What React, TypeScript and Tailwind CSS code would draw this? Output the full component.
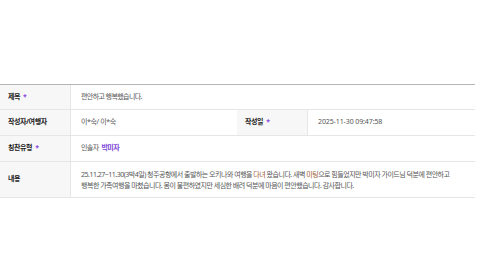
const Label = ({ text, required }: { text: string; required?: boolean }) => (
  <div className="flex w-[70px] shrink-0 items-center bg-[#f7f7f7] pl-[8px] text-[7px] font-bold tracking-[-0.4px] text-[#222]">
    {text}
    {required && <span className="ml-[3px] text-[#8a4ee0]">*</span>}
  </div>
);

const App = () => {
  return (
    <div
      className="h-[280px] w-[480px] bg-white pt-[84px]"
      style={{ fontFamily: '"Noto Sans", "Noto Sans CJK KR", sans-serif' }}
    >
      <div className="w-[475px] border-t border-[#b5b5b5] text-[7px] text-[#555]">
        <div className="flex h-[25px] border-b border-[#e6e6e6]">
          <Label text="제목" required />
          <div className="flex flex-1 items-center border-l border-[#e6e6e6] pl-[10px] tracking-[-0.6px]">
            편안하고 행복했습니다.
          </div>
        </div>
        <div className="flex h-[26px] border-b border-[#e6e6e6]">
          <Label text="작성자/여행자" />
          <div className="flex w-[167px] items-center border-l border-[#e6e6e6] pl-[10px] tracking-[-0.4px]">
            이*숙/ 이*숙
          </div>
          <Label text="작성일" required />
          <div className="flex flex-1 items-center border-l border-[#e6e6e6] pl-[10px] tracking-[-0.1px]">
            2025-11-30 09:47:58
          </div>
        </div>
        <div className="flex h-[26px] border-b border-[#e6e6e6]">
          <Label text="칭찬유형" required />
          <div className="flex flex-1 items-center border-l border-[#e6e6e6] pl-[10px] tracking-[-0.6px]">
            인솔자 <span className="ml-[3px] font-bold text-[#7b45d6]">박미자</span>
          </div>
        </div>
        <div className="flex h-[36px] border-b border-[#e6e6e6]">
          <Label text="내용" />
          <div className="flex flex-1 items-center border-l border-[#e6e6e6] pl-[10px] leading-[11px] tracking-[-0.5px] whitespace-nowrap">
            <p>
              25.11.27~11.30(3박4일) 청주공항에서 출발하는 오키나와 여행을{" "}
              <span className="text-[#9b5a2e]">다녀</span> 왔습니다. 새벽{" "}
              <span className="text-[#9b5a2e]">미팅</span>으로 힘들었지만 박미자 가이드님 덕분에 편안하고
              <br />
              행복한 가족여행을 마쳤습니다. 몸이 불편하였지만 세심한 배려 덕분에 마음이 편안했습니다. 감사합니다.
            </p>
          </div>
        </div>
      </div>
    </div>
  );
};

export default App;
